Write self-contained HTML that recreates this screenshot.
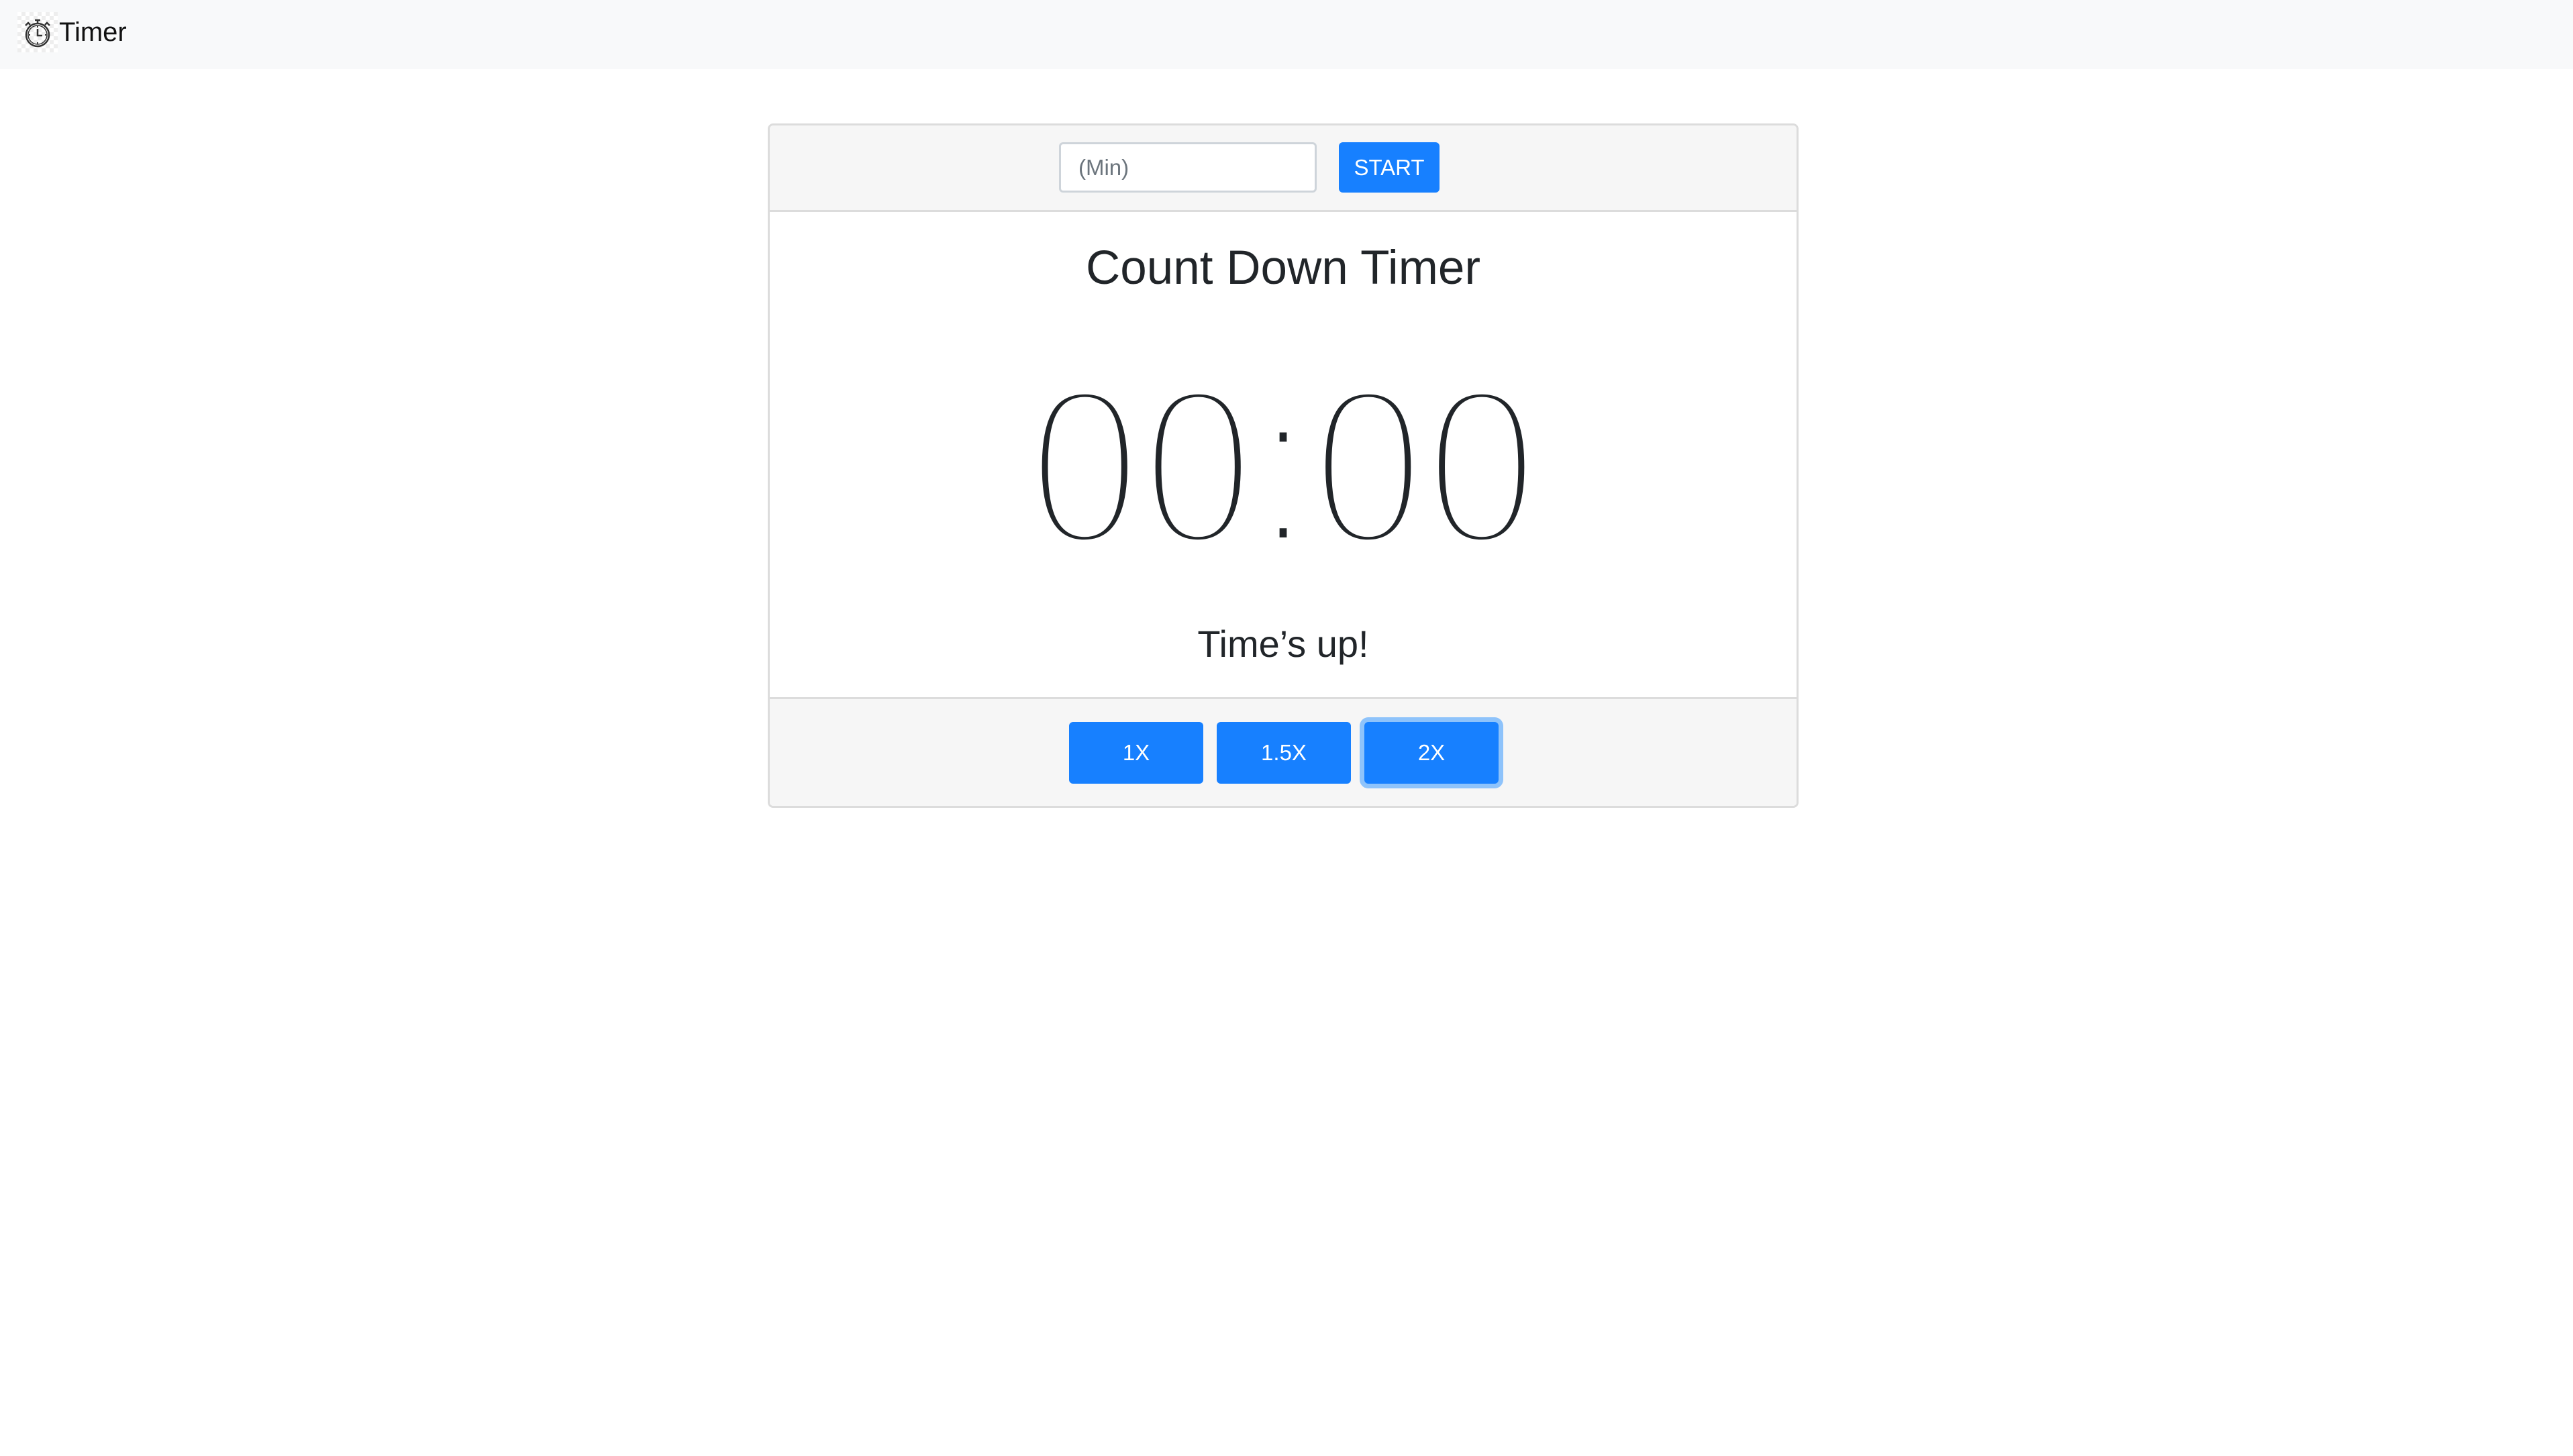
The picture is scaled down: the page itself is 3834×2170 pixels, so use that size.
<!DOCTYPE html>
<html><head><meta charset="utf-8"><style>
html,body{margin:0;padding:0;background:#fff;width:3834px;height:2170px;overflow:hidden;font-family:"Liberation Sans",sans-serif;color:#212529}
.nav{position:absolute;left:0;top:0;width:3834px;height:103px;background:#f8f9fa}
.icon{position:absolute;left:26px;top:18px;width:60px;height:60px;
background-color:#fff;background-image:linear-gradient(45deg,#eee 25%,transparent 25%,transparent 75%,#eee 75%),linear-gradient(45deg,#eee 25%,transparent 25%,transparent 75%,#eee 75%);background-size:12px 12px;background-position:0 0,6px 6px}
.navt{position:absolute;left:88px;top:28px;font-size:40px;line-height:1;color:#111}
.card{position:absolute;left:1144px;top:184px;width:1536px;height:1020px;border:3px solid #dcdcdc;border-radius:8px;box-sizing:border-box;overflow:hidden}
.hdr{position:absolute;left:0;top:0;right:0;height:126px;background:#f6f6f6;border-bottom:3px solid #dcdcdc}
.ftr{position:absolute;left:0;bottom:0;right:0;height:159px;background:#f6f6f6;border-top:3px solid #dcdcdc}
.abs{position:absolute;line-height:1;white-space:nowrap}
.input{position:absolute;left:1578px;top:212px;width:384px;height:75px;box-sizing:border-box;border:3px solid #ced4da;border-radius:6px;background:#fff;font-size:33px;color:#6c757d;display:flex;align-items:center;padding-left:26px}
.btn{position:absolute;background:#1780ff;color:#fff;border-radius:6px;display:flex;align-items:center;justify-content:center;font-size:33px}
</style></head><body>
<div class="nav">
<div class="icon"><svg width="60" height="60" viewBox="0 0 60 60" fill="none" stroke="#333" stroke-width="2.5">
<circle cx="30" cy="34" r="17"/><circle cx="30" cy="34" r="14" stroke-width="1.5"/>
<path d="M26 12h8M30 12v5M12 20l4-4 3 3M48 20l-4-4-3 3M30 25v10h7"/>
<path d="M30 21v2M30 45v2M17 34h2M41 34h2" stroke-width="2"/></svg></div>
<div class="navt">Timer</div>
</div>
<div class="card"><div class="hdr"></div><div class="ftr"></div></div>
<div class="input">(Min)</div>
<div class="btn" style="left:1995px;top:212px;width:150px;height:75px">START</div>
<div class="abs" style="left:1144px;width:1536px;text-align:center;top:364px;font-size:71px">Count Down Timer</div>
<div class="abs" style="left:1144px;width:1536px;text-align:center;top:529px;font-size:334px;color:#212529;-webkit-text-stroke:20px #fff;paint-order:fill stroke;transform:scaleX(0.91)">00:00</div>
<div class="abs" style="left:1144px;width:1536px;text-align:center;top:932px;font-size:56px">Time’s up!</div>
<div class="btn" style="left:1593px;top:1076px;width:200px;height:92px">1X</div>
<div class="btn" style="left:1813px;top:1076px;width:200px;height:92px">1.5X</div>
<div class="btn" style="left:2033px;top:1076px;width:200px;height:92px;box-shadow:0 0 0 7px rgba(38,143,255,.5)">2X</div>
</body></html>
